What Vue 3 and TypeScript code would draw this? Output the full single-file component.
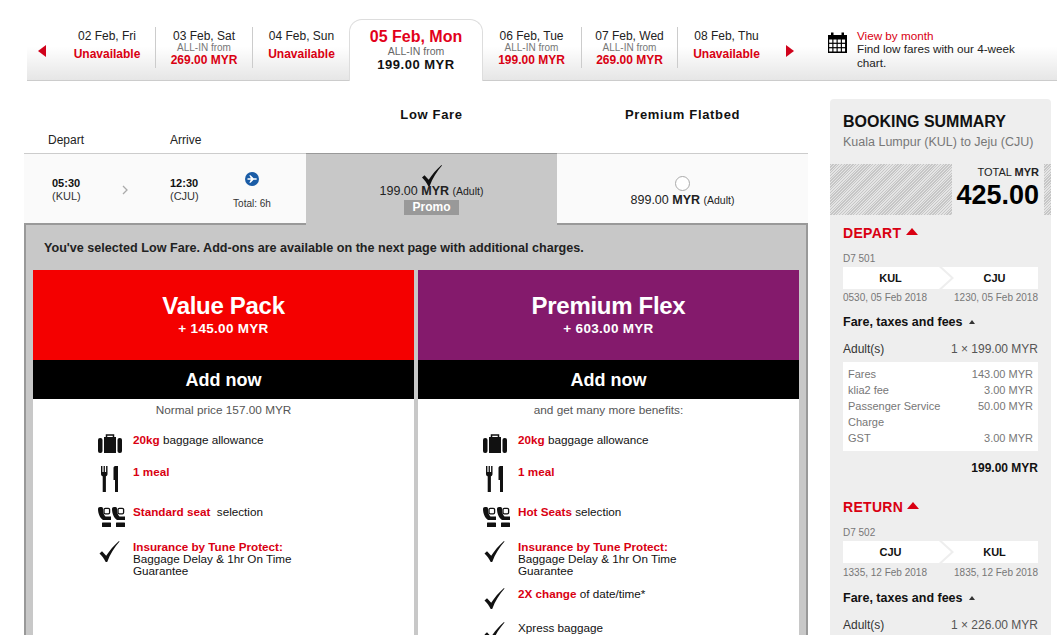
<script setup lang="ts">
type Day = { label: string; price?: string; width: number; sep: boolean }

const daysBefore: Day[] = [
  { label: '02 Feb, Fri', width: 97, sep: true },
  { label: '03 Feb, Sat', price: '269.00 MYR', width: 97, sep: true },
  { label: '04 Feb, Sun', width: 97, sep: false },
]
const daysAfter: Day[] = [
  { label: '06 Feb, Tue', price: '199.00 MYR', width: 100, sep: true },
  { label: '07 Feb, Wed', price: '269.00 MYR', width: 96, sep: true },
  { label: '08 Feb, Thu', width: 97, sep: false },
]

type Feature = { icon: string; red?: string; text?: string; extra?: string; h: number }

const baseFeatures = (seat: string, seatRest: string): Feature[] => [
  { icon: 'bag', red: '20kg', text: ' baggage allowance', h: 32 },
  { icon: 'meal', red: '1 meal', h: 40 },
  { icon: 'seat', red: seat, text: seatRest, h: 35 },
  { icon: 'check', red: 'Insurance by Tune Protect:', extra: 'Baggage Delay & 1hr On Time Guarantee', h: 47 },
]

const packs = [
  {
    name: 'Value Pack',
    price: '+ 145.00 MYR',
    color: '#f40000',
    note: 'Normal price 157.00 MYR',
    features: baseFeatures('Standard seat', '  selection'),
  },
  {
    name: 'Premium Flex',
    price: '+ 603.00 MYR',
    color: '#841a6c',
    note: 'and get many more benefits:',
    features: [
      ...baseFeatures('Hot Seats', ' selection'),
      { icon: 'check', red: '2X change', text: ' of date/time*', h: 34 },
      { icon: 'check', text: 'Xpress baggage', h: 30 },
    ] as Feature[],
  },
]

const legs = [
  {
    title: 'DEPART',
    flight: 'D7 501',
    from: 'KUL',
    to: 'CJU',
    fromTime: '0530, 05 Feb 2018',
    toTime: '1230, 05 Feb 2018',
    adult: '1 × 199.00 MYR',
    fees: [
      ['Fares', '143.00 MYR'],
      ['klia2 fee', '3.00 MYR'],
      ['Passenger Service Charge', '50.00 MYR'],
      ['GST', '3.00 MYR'],
    ],
    total: '199.00 MYR',
  },
  {
    title: 'RETURN',
    flight: 'D7 502',
    from: 'CJU',
    to: 'KUL',
    fromTime: '1335, 12 Feb 2018',
    toTime: '1835, 12 Feb 2018',
    adult: '1 × 226.00 MYR',
    fees: [],
    total: '',
  },
]
</script>

<template>
  <div class="page">
    <div class="strip">
      <div class="arrow-box arrow-box--left"><span class="arrow arrow--left"></span></div>
      <div
        v-for="d in daysBefore"
        :key="d.label"
        class="day"
        :class="{ 'day--sep': d.sep }"
        :style="{ width: d.width + 'px' }"
      >
        <div class="day__label">{{ d.label }}</div>
        <template v-if="d.price">
          <div class="day__from">ALL-IN from</div>
          <div class="day__price">{{ d.price }}</div>
        </template>
        <div v-else class="day__none">Unavailable</div>
      </div>
      <div class="tab">
        <div class="tab__label">05 Feb, Mon</div>
        <div class="tab__from">ALL-IN from</div>
        <div class="tab__price">199.00 MYR</div>
      </div>
      <div
        v-for="d in daysAfter"
        :key="d.label"
        class="day"
        :class="{ 'day--sep': d.sep }"
        :style="{ width: d.width + 'px' }"
      >
        <div class="day__label">{{ d.label }}</div>
        <template v-if="d.price">
          <div class="day__from">ALL-IN from</div>
          <div class="day__price">{{ d.price }}</div>
        </template>
        <div v-else class="day__none">Unavailable</div>
      </div>
      <div class="arrow-box arrow-box--right"><span class="arrow arrow--right"></span></div>
      <div class="month">
        <svg class="month__icon" width="19" height="21" viewBox="0 0 19 21">
          <path d="M0 3h3V.5h2.500V3h8V.5H16V3h3v18H0z" fill="#000" />
          <g fill="#fff">
            <rect v-for="c in 12" :key="c" :x="1.2 + ((c - 1) % 4) * 4.25" :y="7.5 + Math.floor((c - 1) / 4) * 4.4" width="3.1" height="3.2" />
          </g>
        </svg>
        <div class="month__text">
          <div class="month__link">View by month</div>
          <div>Find low fares with our 4-week chart.</div>
        </div>
      </div>
    </div>

    <div class="main">
      <div class="fares">
        <div class="heads">
          <div class="heads__info">
            <span class="heads__depart">Depart</span>
            <span>Arrive</span>
          </div>
          <div class="heads__fare">Low Fare</div>
          <div class="heads__fare">Premium Flatbed</div>
        </div>

        <div class="row">
          <div class="info">
            <div class="info__time info__time--depart"><b>05:30</b><span>(KUL)</span></div>
            <svg class="info__chevron" width="6" height="10" viewBox="0 0 6 10">
              <path d="M1 1l4 4-4 4" fill="none" stroke="#aaa" stroke-width="1.3" />
            </svg>
            <div class="info__time"><b>12:30</b><span>(CJU)</span></div>
            <div class="info__total">
              <svg width="14" height="14" viewBox="0 0 14 14">
                <circle cx="7" cy="7" r="7" fill="#1a5ca6" />
                <path d="M2.5 6.2h3.3L4.3 3.2h1.3l3 3h2c.9 0 1.3.4 1.3.8s-.4.8-1.3.8h-2l-3 3H4.3l1.5-3H2.5z" fill="#fff" />
              </svg>
              <span>Total: 6h</span>
            </div>
          </div>
          <div class="fare fare--active">
            <svg class="fare__check" width="20" height="21" viewBox="0 0 20 21">
              <path d="M0 12.500l2.500-2.300 4.200 4.600C10 9.500 14.500 4.500 19.500 0l.5.600C15 6.500 10.500 13 7.700 21H6.200C4.700 17.800 2.700 15 0 12.500z" fill="#111" />
            </svg>
            <div class="fare__price">199.00 <b>MYR</b> <small>(Adult)</small></div>
            <div class="fare__promo">Promo</div>
          </div>
          <div class="fare fare--plain">
            <span class="fare__radio"></span>
            <div class="fare__price">899.00 <b>MYR</b> <small>(Adult)</small></div>
          </div>
        </div>

        <div class="panel">
          <p class="panel__msg">You've selected Low Fare. Add-ons are available on the next page with additional charges.</p>
          <div class="packs">
            <div v-for="p in packs" :key="p.name" class="pack">
              <div class="pack__top" :style="{ background: p.color }">
                <div class="pack__name">{{ p.name }}</div>
                <div class="pack__price">{{ p.price }}</div>
              </div>
              <div class="pack__add">Add now</div>
              <div class="pack__note">{{ p.note }}</div>
              <ul class="features">
                <li v-for="f in p.features" :key="f.icon + f.red + f.text" class="feature" :style="{ height: f.h + 'px' }">
                  <span class="feature__icon">
                    <svg v-if="f.icon === 'bag'" class="ico-bag" width="24" height="19" viewBox="0 0 24 19">
                      <rect x="0" y="4" width="4.500" height="15" rx="2" fill="#111" />
                      <rect x="19.500" y="4" width="4.500" height="15" rx="2" fill="#111" />
                      <rect x="6" y="3" width="12" height="16" fill="#111" />
                      <path d="M8.500 4V1h7v3" fill="none" stroke="#111" stroke-width="1.500" />
                    </svg>
                    <svg v-else-if="f.icon === 'meal'" class="ico-meal" width="17" height="26" viewBox="0 0 17 26">
                      <path d="M0 0h1.400v6h1.200V0h1.300v6h1.200V0h1.400v8c0 1.100-.6 1.900-1.600 2.200V26H1.700V10.200C.6 9.900 0 9.100 0 8z" fill="#111" />
                      <path d="M12.500 2c0-1.200.8-2 1.800-2H17v26h-3V14h-1.500z" fill="#111" />
                    </svg>
                    <svg v-else-if="f.icon === 'seat'" class="ico-seat" width="27" height="20" viewBox="0 0 27 20">
                      <g v-for="x in [0, 14]" :key="x" :transform="`translate(${x} 0)`">
                        <path d="M0 2C0 .8.800 0 2 0h1.500C4.500 0 5 .8 5 2c0 3 .5 6 2.500 7.500H13V13H5C1.800 11 0 6 0 2z" fill="#111" />
                        <rect x="6" y="1.300" width="5.600" height="5.600" rx="1.300" fill="none" stroke="#111" stroke-width="1.300" />
                        <rect x="4" y="15.500" width="9" height="4.500" rx=".6" fill="#111" />
                      </g>
                    </svg>
                    <svg v-else class="ico-check" width="21" height="21" viewBox="0 0 20 21">
                      <path d="M0 12.500l2.500-2.300 4.200 4.600C10 9.500 14.500 4.500 19.500 0l.5.600C15 6.500 10.500 13 7.700 21H6.200C4.700 17.800 2.700 15 0 12.500z" fill="#111" />
                    </svg>
                  </span>
                  <div class="feature__text">
                    <span v-if="f.red" class="feature__red">{{ f.red }}</span><span v-if="f.text" class="feature__rest">{{ f.text }}</span>
                    <div v-if="f.extra">{{ f.extra }}</div>
                  </div>
                </li>
              </ul>
            </div>
          </div>
        </div>
      </div>

      <aside class="summary">
        <h2 class="summary__title">BOOKING SUMMARY</h2>
        <p class="summary__route">Kuala Lumpur (KUL) to Jeju (CJU)</p>
        <div class="total">
          <div class="total__hatch"></div>
          <div class="total__box">
            <div class="total__label">TOTAL <b>MYR</b></div>
            <div class="total__value">425.00</div>
          </div>
          <div class="total__hatch total__hatch--end"></div>
        </div>

        <section v-for="leg in legs" :key="leg.title" class="leg">
          <h3 class="leg__title">{{ leg.title }} <span class="leg__caret"></span></h3>
          <div class="leg__flight">{{ leg.flight }}</div>
          <div class="route">
            <div class="route__from">{{ leg.from }}</div>
            <div class="route__to">{{ leg.to }}</div>
          </div>
          <div class="leg__times">
            <span>{{ leg.fromTime }}</span>
            <span>{{ leg.toTime }}</span>
          </div>
          <div class="leg__fees">Fare, taxes and fees <span class="leg__mini"></span></div>
          <div class="leg__adult">
            <span>Adult(s)</span>
            <span class="leg__adult-val">{{ leg.adult }}</span>
          </div>
          <div v-if="leg.fees.length" class="breakdown">
            <div v-for="f in leg.fees" :key="f[0]" class="breakdown__row">
              <span class="breakdown__name">{{ f[0] }}</span>
              <span>{{ f[1] }}</span>
            </div>
          </div>
          <div v-if="leg.total" class="leg__total">{{ leg.total }}</div>
        </section>
      </aside>
    </div>
  </div>
</template>

<style scoped>
.page {
  width: 1057px;
  height: 635px;
  overflow: hidden;
  background: #fff;
  color: #111;
  font-family: "Liberation Sans", Arial, sans-serif;
  font-size: 12px;
  padding-top: 19px;
  box-sizing: border-box;
}

/* date strip */
.strip {
  display: flex;
  margin-left: 27px;
  height: 62px;
  box-sizing: border-box;
  border-bottom: 1px solid #ccc;
  background: linear-gradient(to bottom, #fff 0%, #fff 45%, #e6e6e6 100%);
}

.arrow-box {
  display: flex;
  align-items: center;
  height: 62px;
  padding-top: 2px;
  flex: none;
  box-sizing: border-box;
}

.arrow-box--left {
  width: 32px;
  padding-left: 11px;
}

.arrow-box--right {
  width: 53px;
  padding-left: 11px;
}

.arrow {
  display: block;
  width: 0;
  height: 0;
  border-top: 6px solid transparent;
  border-bottom: 6px solid transparent;
}

.arrow--left {
  border-right: 8px solid #d0021b;
}

.arrow--right {
  border-left: 8px solid #d0021b;
}

.day {
  flex: none;
  height: 41px;
  margin-top: 8px;
  box-sizing: border-box;
  text-align: center;
  padding-top: 2px;
}

.day--sep {
  border-right: 1px solid #ccc;
}

.day__label {
  line-height: 14px;
  color: #222;
}

.day__none {
  margin-top: 4px;
  line-height: 14px;
  font-weight: 700;
  color: #d90012;
}

.day__from {
  margin-top: -1px;
  font-size: 10px;
  line-height: 11px;
  color: #777;
}

.day__price {
  margin-top: 1px;
  line-height: 13px;
  font-weight: 700;
  color: #d90012;
}

.tab {
  flex: none;
  width: 134px;
  height: 62px;
  box-sizing: border-box;
  margin-left: -1px;
  margin-right: -1px;
  background: #fff;
  border: 1px solid #ddd;
  border-bottom: none;
  border-radius: 13px 13px 0 0;
  text-align: center;
  padding-top: 8px;
  position: relative;
}

.tab__label {
  font-size: 16px;
  line-height: 18px;
  font-weight: 700;
  color: #e2001a;
}

.tab__from {
  font-size: 10.5px;
  line-height: 11px;
  color: #666;
}

.tab__price {
  font-size: 13px;
  line-height: 15px;
  font-weight: 700;
  letter-spacing: 0.5px;
  color: #111;
}

.month {
  display: flex;
  gap: 10px;
  padding-top: 10px;
  width: 200px;
  flex: none;
}

.month__icon {
  flex: none;
  margin-top: 3px;
}

.month__text {
  font-size: 11.7px;
  line-height: 13.4px;
  color: #222;
  width: 170px;
}

.month__link {
  color: #d90012;
}

/* main area */
.main {
  display: flex;
  align-items: flex-start;
  margin-left: 24px;
  margin-top: 18px;
}

.fares {
  width: 784px;
  flex: none;
}

.heads {
  display: flex;
  height: 54px;
}

.heads__info {
  width: 282px;
  display: flex;
  align-items: flex-end;
  padding: 0 0 6px 24px;
  box-sizing: border-box;
  color: #222;
  line-height: 14px;
}

.heads__depart {
  width: 122px;
}

.heads__fare {
  flex: 1;
  text-align: center;
  font-size: 13px;
  font-weight: 700;
  letter-spacing: 0.65px;
  line-height: 16px;
  padding-top: 8px;
}

.row {
  display: flex;
  height: 72px;
}

.info {
  width: 282px;
  flex: none;
  display: flex;
  box-sizing: border-box;
  padding-left: 28px;
  background: #fafafa;
  border-top: 1px solid #ccc;
  border-bottom: 2px solid #999;
}

.info__time {
  display: flex;
  flex-direction: column;
  width: 60px;
  padding-top: 23px;
  font-size: 11px;
  line-height: 13px;
  flex: none;
}

.info__time--depart {
  width: 70px;
}

.info__time span {
  font-size: 11px;
  color: #333;
}

.info__chevron {
  flex: none;
  margin: 31px 42px 0 0;
}

.info__total {
  display: flex;
  flex-direction: column;
  align-items: center;
  width: 44px;
  padding-top: 18px;
  font-size: 10px;
  color: #333;
}

.info__total span {
  margin-top: 12px;
  white-space: nowrap;
}

.fare {
  flex: 1;
  display: flex;
  flex-direction: column;
  align-items: center;
  box-sizing: border-box;
}

.fare--active {
  background: #c8c8c8;
  border-top: 1px solid #999;
  padding-top: 11px;
}

.fare--plain {
  background: #fafafa;
  border-top: 1px solid #ccc;
  border-bottom: 2px solid #999;
  padding-top: 22px;
}

.fare__check {
  display: block;
  height: 21px;
}

.fare__price {
  font-size: 12.5px;
  line-height: 14px;
  color: #222;
}

.fare--active .fare__price {
  margin-top: -2px;
}

.fare--plain .fare__price {
  margin-top: 2px;
}

.fare__price small {
  font-size: 10.5px;
}

.fare__promo {
  margin-top: 2px;
  width: 55px;
  height: 15px;
  background: #999;
  color: #fff;
  font-weight: 700;
  font-size: 12px;
  line-height: 15px;
  text-align: center;
}

.fare__radio {
  width: 15px;
  height: 15px;
  box-sizing: border-box;
  border-radius: 50%;
  border: 1px solid #aaa;
  background: #fff;
}

.panel {
  background: #c8c8c8;
  border: 2px solid #999;
  border-top: none;
  padding: 0 7px;
  height: 420px;
  box-sizing: border-box;
}

.panel__msg {
  margin: 0;
  padding-top: 15px;
  height: 45px;
  box-sizing: border-box;
  padding-left: 11px;
  font-size: 12.6px;
  line-height: 16px;
  font-weight: 700;
  color: #222;
}

.packs {
  display: flex;
  gap: 4px;
}

.pack {
  width: 381px;
  background: #fff;
  height: 380px;
  flex: none;
}

.pack__top {
  height: 90px;
  color: #fff;
  text-align: center;
  font-weight: 700;
  box-sizing: border-box;
  padding-top: 22px;
}

.pack__name {
  font-size: 24px;
  line-height: 28px;
  letter-spacing: -0.3px;
}

.pack__price {
  font-size: 13.5px;
  line-height: 18px;
  letter-spacing: 0.3px;
}

.pack__add {
  height: 39px;
  background: #000;
  color: #fff;
  font-size: 18px;
  line-height: 41px;
  font-weight: 700;
  text-align: center;
}

.pack__note {
  text-align: center;
  color: #555;
  font-size: 11.8px;
  line-height: 14px;
  padding-top: 4px;
}

.features {
  list-style: none;
  margin: 0;
  padding: 16px 0 0 65px;
}

.feature {
  display: flex;
  box-sizing: border-box;
}

.feature__icon {
  flex: none;
  width: 35px;
  display: flex;
}

.ico-bag {
  margin-top: 1px;
}

.ico-meal {
  margin: 1px 0 0 3px;
}

.ico-seat {
  margin-top: 2px;
}

.ico-check {
  margin: 1px 0 0 1px;
}

.feature__text {
  width: 175px;
  font-size: 11.7px;
  line-height: 12px;
  padding-top: 1px;
  color: #111;
}

.feature__red {
  color: #d90012;
  font-weight: 700;
}

.feature__rest {
  white-space: pre-wrap;
}

/* summary */
.summary {
  flex: none;
  width: 221px;
  height: 560px;
  margin: 0 0 0 22px;
  padding: 14px 13px 0;
  box-sizing: border-box;
  background: #eee;
  border-radius: 4px 4px 0 0;
}

.summary__title {
  margin: 0;
  font-size: 16px;
  line-height: 18px;
  font-weight: 700;
  color: #111;
}

.summary__route {
  margin: 3px 0 0;
  font-size: 12.5px;
  line-height: 17px;
  color: #777;
}

.total {
  display: flex;
  height: 51px;
  margin: 13px -13px 0;
}

.total__hatch {
  width: 122px;
  flex: none;
  background: repeating-linear-gradient(135deg, #c6c6c6 0 1px, #e4e4e4 1px 2px);
}

.total__hatch--end {
  width: 7px;
}

.total__box {
  flex: none;
  width: 92px;
  box-sizing: border-box;
  padding-right: 5px;
  text-align: right;
}

.total__label {
  font-size: 11px;
  line-height: 14px;
  padding-top: 1px;
  color: #222;
}

.total__value {
  font-size: 27px;
  line-height: 32px;
  font-weight: 700;
  color: #000;
}

.leg {
  padding-top: 10px;
}

.leg + .leg {
  padding-top: 23px;
}

.leg__title {
  margin: 0;
  font-size: 14px;
  line-height: 16px;
  font-weight: 700;
  color: #d90012;
  letter-spacing: 0.3px;
}

.leg__caret {
  display: inline-block;
  width: 0;
  height: 0;
  margin-bottom: 3px;
  border-left: 6px solid transparent;
  border-right: 6px solid transparent;
  border-bottom: 7px solid #d90012;
}

.leg__flight {
  margin-top: 12px;
  font-size: 10px;
  line-height: 12px;
  color: #777;
}

.route {
  display: flex;
  margin-top: 2px;
  height: 22px;
  font-size: 11px;
  font-weight: 700;
  line-height: 22px;
  text-align: center;
}

.route__from {
  width: 108px;
  flex: none;
  background: #fff;
  padding-right: 13px;
  box-sizing: border-box;
  clip-path: polygon(0 0, 96px 0, 108px 50%, 96px 100%, 0 100%);
}

.route__to {
  flex: 1;
  margin-left: -9px;
  background: #fff;
  padding-left: 9px;
  clip-path: polygon(0 0, 100% 0, 100% 100%, 0 100%, 12px 50%);
}

.leg__times {
  display: flex;
  justify-content: space-between;
  margin-top: 2px;
  font-size: 10px;
  line-height: 13px;
  color: #777;
}

.leg + .leg .leg__times {
  margin-top: 3px;
}

.leg__fees {
  margin-top: 10px;
  font-size: 12.5px;
  line-height: 16px;
  font-weight: 700;
}

.leg + .leg .leg__fees {
  margin-top: 11px;
}

.leg__mini {
  display: inline-block;
  width: 0;
  height: 0;
  margin: 0 0 2px 3px;
  border-left: 3.5px solid transparent;
  border-right: 3.5px solid transparent;
  border-bottom: 4px solid #333;
}

.leg__adult {
  display: flex;
  justify-content: space-between;
  margin-top: 11px;
  line-height: 16px;
  color: #333;
}

.leg__adult-val {
  color: #555;
}

.breakdown {
  margin-top: 5px;
  background: #fff;
  padding: 4px 5px 5px;
  font-size: 11px;
  line-height: 16px;
  color: #777;
}

.breakdown__row {
  display: flex;
  justify-content: space-between;
}

.breakdown__name {
  width: 110px;
}

.leg__total {
  margin-top: 9px;
  text-align: right;
  font-weight: 700;
  line-height: 16px;
}
</style>

<style>
html,
body {
  margin: 0;
  overflow: hidden;
}
</style>
